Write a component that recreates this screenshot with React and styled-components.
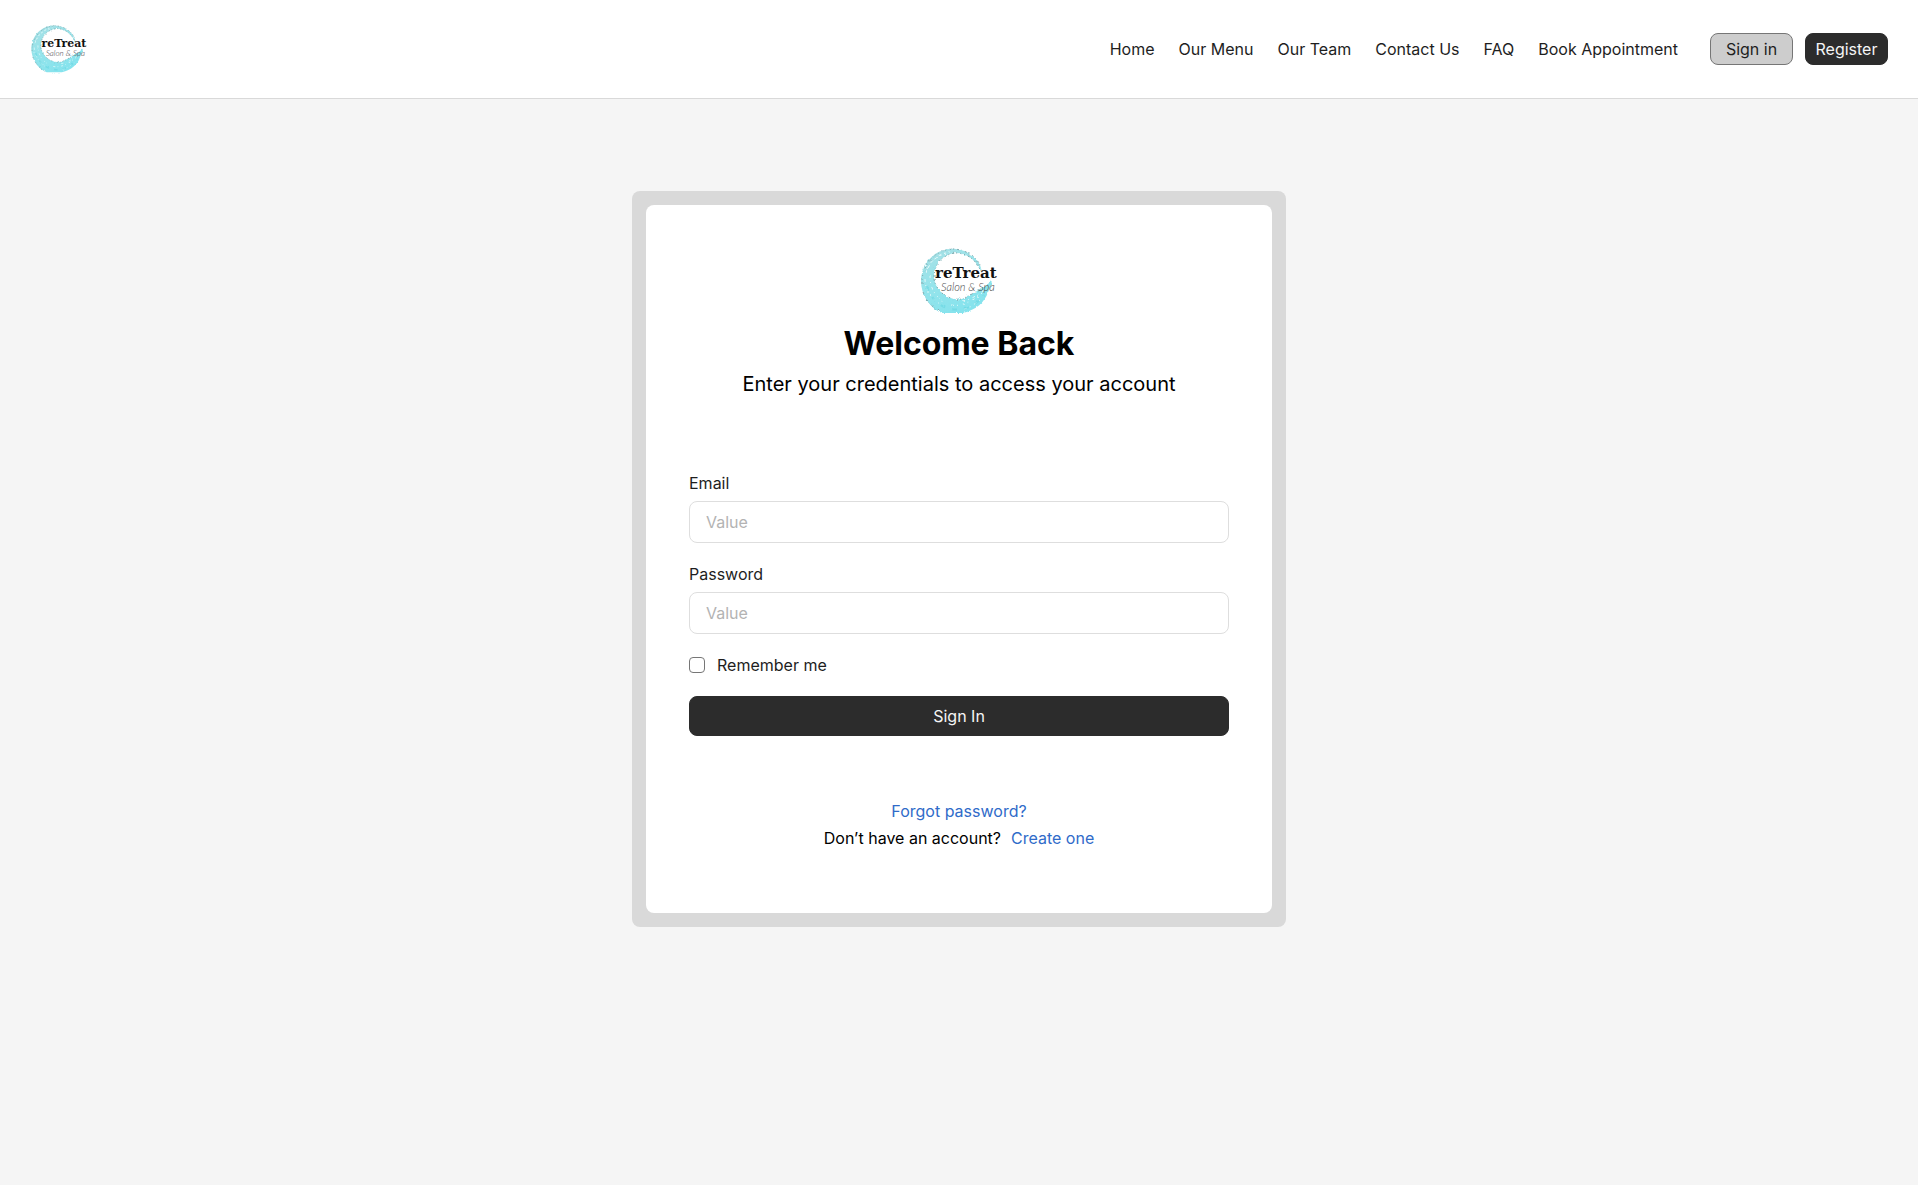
import React, { useId } from "react";
import styled, { createGlobalStyle } from "styled-components";

const GlobalStyle = createGlobalStyle`
  *, *::before, *::after { box-sizing: border-box; }
  body {
    margin: 0;
    background: #f5f5f5;
    color: #1e1e1e;
    font-family: Inter, "Liberation Sans", sans-serif;
    font-size: 16px;
    line-height: 24px;
  }
`;

const Header = styled.header`
  display: flex;
  align-items: center;
  justify-content: space-between;
  padding: 25px 30px;
  background: #fff;
  border-bottom: 1px solid #d9d9d9;
`;

const HomeLink = styled.a`
  display: flex;
`;

const HeaderEnd = styled.div`
  display: flex;
  align-items: center;
  gap: 32px;
`;

const Nav = styled.nav`
  display: flex;
  gap: 24px;
`;

const NavLink = styled.a`
  color: #1e1e1e;
  text-decoration: none;
`;

const HeaderActions = styled.div`
  display: flex;
  gap: 12px;
`;

const Button = styled.button`
  min-width: ${(p) => (p.$wide ? "100%" : "83px")};
  height: ${(p) => (p.$wide ? "40px" : "32px")};
  padding: 0 8px;
  border: 1px solid ${(p) => (p.$subtle ? "#767676" : "#2c2c2c")};
  border-radius: 8px;
  background: ${(p) => (p.$subtle ? "#cdcdcd" : "#2c2c2c")};
  color: ${(p) => (p.$subtle ? "#1e1e1e" : "#f5f5f5")};
  font: inherit;
  cursor: pointer;
`;

const Main = styled.main`
  display: flex;
  justify-content: center;
  padding: 92px 16px;
`;

const CardFrame = styled.section`
  width: 100%;
  max-width: 654px;
  padding: 14px;
  border-radius: 8px;
  background: #d9d9d9;
`;

const Card = styled.div`
  display: flex;
  flex-direction: column;
  padding: 43px 43px 63px;
  border-radius: 8px;
  background: #fff;
`;

const Intro = styled.div`
  display: flex;
  flex-direction: column;
  align-items: center;
  color: #000;
  text-align: center;
`;

const Title = styled.h1`
  margin: 10px 0 4px;
  font-size: 32px;
  font-weight: 700;
  line-height: 40px;
`;

const Subtitle = styled.p`
  margin: 0;
  font-size: 20px;
  line-height: 32px;
`;

const Form = styled.form`
  display: flex;
  flex-direction: column;
  gap: 19px;
  margin-top: 71px;
`;

const Field = styled.div`
  display: flex;
  flex-direction: column;
  gap: 6px;
`;

const Input = styled.input`
  width: 100%;
  height: 42px;
  padding: 0 16px;
  border: 1px solid #dedede;
  border-radius: 8px;
  background: #fff;
  color: #1e1e1e;
  font: inherit;
  &::placeholder { color: #b3b3b3; opacity: 1; }
`;

const CheckRow = styled.label`
  display: flex;
  align-items: center;
  gap: 12px;
`;

const Checkbox = styled.input`
  appearance: none;
  width: 16px;
  height: 16px;
  margin: 0;
  border: 1px solid #767676;
  border-radius: 4px;
  background: #fff;
  &:checked { background: #2c2c2c; }
`;

const Links = styled.div`
  display: flex;
  flex-direction: column;
  align-items: center;
  gap: 3px;
  margin-top: 63px;
  color: #000;
`;

const LinkRow = styled.p`
  display: flex;
  gap: 10px;
  margin: 0;
`;

const TextLink = styled.a`
  color: #2f6bc9;
  text-decoration: none;
`;

function Logo({ width, height }) {
  const id = useId();
  const rough = `${id}-rough`;
  const wash = `${id}-wash`;
  return (
    <svg width={width} height={height} viewBox="-1 0 78 66" overflow="visible" role="img" aria-label="reTreat Salon & Spa">
      <defs>
        <linearGradient id={wash} x1="0" y1="0" x2="0.5" y2="1">
          <stop offset="0" stopColor="#a9dfe4" />
          <stop offset="0.5" stopColor="#96e4eb" />
          <stop offset="1" stopColor="#86e3ed" />
        </linearGradient>
        <filter id={rough} x="-5%" y="-5%" width="110%" height="110%">
          <feTurbulence type="fractalNoise" baseFrequency="0.35" numOctaves="2" seed="4" result="grain" />
          <feDisplacementMap in="SourceGraphic" in2="grain" scale="3" xChannelSelector="R" yChannelSelector="G" />
        </filter>
      </defs>
      <g filter={`url(#${rough})`}>
        <path
          fill={`url(#${wash})`}
          d="M61 25 C60 13 50 3 35 1 C16 -1 0 14 0 33 C0 46 8 60 21 65 H42 C55 62 64 54 67 44 C69 40 72 35 70 32 C68 36 64 39 60 40 C54 45 47 48 41 51 C27 53 14 43 13 29 C13 16 22 6 35 5 C47 5 56 13 61 25 Z"
        />
        <path
          fill="none"
          stroke="#7fa9ae"
          strokeWidth="1"
          strokeDasharray="2 2 1 3"
          d="M13 29 C13 16 22 6 35 5 C47 5 56 13 61 25 M13 31 C15 43 27 53 41 51 C47 48 54 45 60 40 M1 36 C0 18 14 1 33 1 C46 2 56 9 60 19 M2 44 C6 54 12 60 20 64"
        />
        <path
          fill="none"
          stroke="#e2f9fa"
          strokeWidth="1"
          strokeDasharray="3 3 1 4"
          d="M5 25 C8 13 18 5 29 4 M4 31 C4 43 11 51 19 56 M9 28 C9 40 14 48 23 54 M7 20 C12 11 18 7 25 5 M30 57 C41 59 52 53 61 45 M41 53 C50 52 56 47 64 42 M43 61 C51 59 57 53 62 50"
        />
        <path
          fill="none"
          stroke="#5fd3df"
          strokeWidth="2"
          strokeDasharray="5 7"
          opacity="0.5"
          d="M6 38 C9 49 17 58 29 61 C42 63 55 58 63 47"
        />
      </g>
      <text x="14" y="30" fill="#111" fontFamily="'DejaVu Serif', serif" fontWeight="700" fontSize="15">
        reTreat
      </text>
      <text x="20" y="43" fill="#444" fontFamily="Lato, sans-serif" fontWeight="300" fontStyle="italic" fontSize="11">
        Salon &amp; Spa
      </text>
    </svg>
  );
}

const NAV_ITEMS = ["Home", "Our Menu", "Our Team", "Contact Us", "FAQ", "Book Appointment"];

export default function App() {
  return (
    <>
      <GlobalStyle />
      <Header>
        <HomeLink href="#">
          <Logo width={58} height={48} />
        </HomeLink>
        <HeaderEnd>
          <Nav>
            {NAV_ITEMS.map((item) => (
              <NavLink href="#" key={item}>{item}</NavLink>
            ))}
          </Nav>
          <HeaderActions>
            <Button type="button" $subtle>Sign in</Button>
            <Button type="button">Register</Button>
          </HeaderActions>
        </HeaderEnd>
      </Header>
      <Main>
        <CardFrame>
          <Card>
            <Intro>
              <Logo width={78} height={66} />
              <Title>Welcome Back</Title>
              <Subtitle>Enter your credentials to access your account</Subtitle>
            </Intro>
            <Form onSubmit={(e) => e.preventDefault()}>
              <Field>
                <label htmlFor="email">Email</label>
                <Input id="email" type="email" placeholder="Value" />
              </Field>
              <Field>
                <label htmlFor="password">Password</label>
                <Input id="password" type="password" placeholder="Value" />
              </Field>
              <CheckRow htmlFor="remember">
                <Checkbox id="remember" type="checkbox" />
                Remember me
              </CheckRow>
              <Button type="submit" $wide>Sign In</Button>
            </Form>
            <Links>
              <TextLink href="#">Forgot password?</TextLink>
              <LinkRow>
                Don’t have an account?
                <TextLink href="#">Create one</TextLink>
              </LinkRow>
            </Links>
          </Card>
        </CardFrame>
      </Main>
    </>
  );
}
